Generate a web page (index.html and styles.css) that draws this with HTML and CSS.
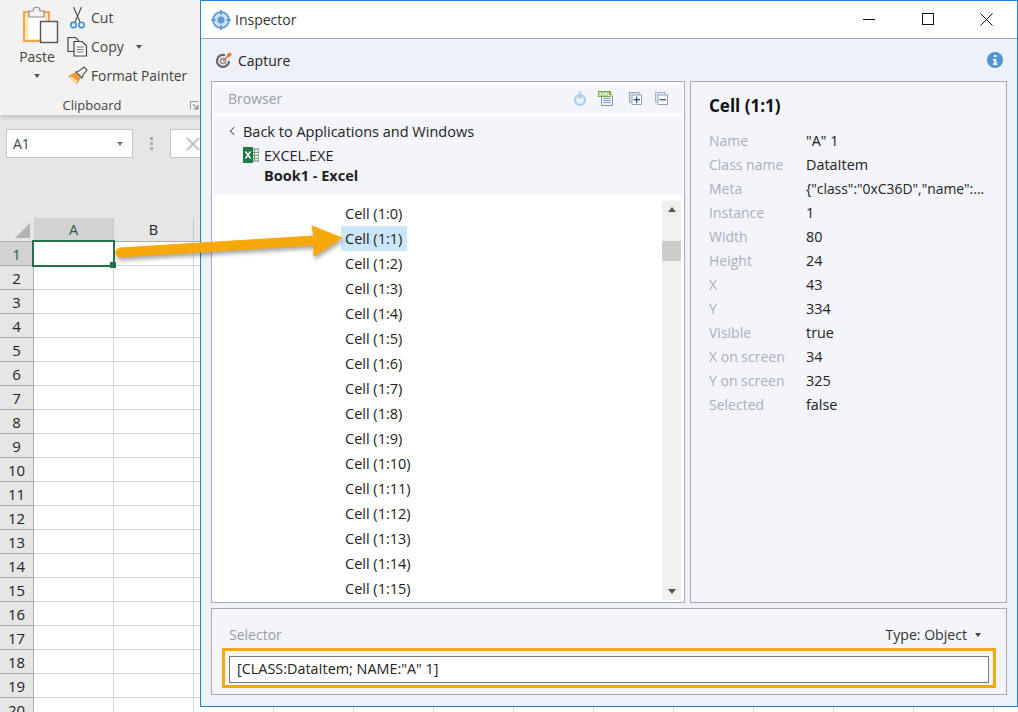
FILE: index.html
```html
<!DOCTYPE html>
<html lang="en">
<head>
  <meta charset="UTF-8" />
  <title>Inspector</title>
  <link rel="stylesheet" href="styles.css">
</head>
<body>
  <!-- Excel behind the inspector -->
  <div class="excel">
    <div class="ribbon">
      <div class="ribbon-tools">
        <div class="paste">
          <svg width="36" height="38" viewBox="0 0 36 38">
            <rect x="1" y="6" width="25" height="29" fill="#fde3b5" stroke="#f0a54e" stroke-width="2"/>
            <rect x="5" y="10" width="17" height="23" fill="#fff"/>
            <path d="M6 11V5h4c0-5 7-5 7 0h4v6z" fill="#f3f2f1" stroke="#8a8a8a" stroke-width="1.2"/>
            <rect x="17.500" y="15.500" width="17" height="21" fill="#f7f7f7" stroke="#555" stroke-width="1.4"/>
          </svg>
          <span>Paste</span>
          <i class="caret"></i>
        </div>
        <div class="clip-list">
          <div class="clip-item">
            <svg width="18" height="24" viewBox="0 0 18 24">
              <path d="M5 1l6.500 15M13 1L6.500 16" fill="none" stroke="#555" stroke-width="1.2"/>
              <circle cx="5" cy="19" r="2.700" fill="none" stroke="#2f8ed6" stroke-width="1.500"/>
              <circle cx="13" cy="19" r="2.700" fill="none" stroke="#2f8ed6" stroke-width="1.500"/>
            </svg>
            <span>Cut</span>
          </div>
          <div class="clip-item">
            <svg width="22" height="21" viewBox="0 0 22 21">
              <path d="M8 15.500H1.500V1.500H9l3 3v1" fill="#f3f2f1" stroke="#444" stroke-width="1.200"/>
              <path d="M7.500 5.500h8l4.500 4.500v10H7.500z" fill="#fafafa" stroke="#444" stroke-width="1.200"/>
              <path d="M10 11h7M10 13.500h7M10 16h7" stroke="#777"/>
            </svg>
            <span>Copy</span>
            <i class="caret copy-caret"></i>
          </div>
          <div class="clip-item">
            <svg width="21" height="19" viewBox="0 0 21 19">
              <path d="M1 10l8-4 5 6-4 6z" fill="#f39a3d"/>
              <path d="M4 11l6 5" stroke="#fff" stroke-width="1.200"/>
              <path d="M9 6l3-1 5-4 3 3-4 5-1 3z" fill="#f3f2f1" stroke="#555" stroke-width="1.200"/>
            </svg>
            <span class="painter">Format Painter</span>
          </div>
        </div>
      </div>
      <div class="ribbon-label">Clipboard</div>
      <svg class="launcher" width="9" height="9" viewBox="0 0 9 9">
        <path d="M.5 8V.5H8" fill="none" stroke="#999"/>
        <path d="M3 3l4.500 4.500M8 4v4H4" fill="none" stroke="#666"/>
      </svg>
    </div>
    <div class="formula-area">
      <div class="name-box">A1<i class="caret name-caret"></i></div>
      <div class="dots"><i></i><i></i><i></i></div>
      <div class="formula-btn">
        <svg width="16" height="16" viewBox="0 0 16 16"><path d="M2 2l12 12M14 2L2 14" stroke="#c4c4c4" stroke-width="2"/></svg>
      </div>
    </div>
    <div class="sheet">
      <div class="col-heads">
        <div class="corner"></div>
        <div class="col-head on">A</div>
        <div class="col-head">B</div>
        <div class="col-head"></div>
      </div>
      <div class="row"><div class="row-num on">1</div><div class="cells"><div class="active-cell"></div></div></div>
      <div class="row"><div class="row-num">2</div><div class="cells"></div></div>
      <div class="row"><div class="row-num">3</div><div class="cells"></div></div>
      <div class="row"><div class="row-num">4</div><div class="cells"></div></div>
      <div class="row"><div class="row-num">5</div><div class="cells"></div></div>
      <div class="row"><div class="row-num">6</div><div class="cells"></div></div>
      <div class="row"><div class="row-num">7</div><div class="cells"></div></div>
      <div class="row"><div class="row-num">8</div><div class="cells"></div></div>
      <div class="row"><div class="row-num">9</div><div class="cells"></div></div>
      <div class="row"><div class="row-num">10</div><div class="cells"></div></div>
      <div class="row"><div class="row-num">11</div><div class="cells"></div></div>
      <div class="row"><div class="row-num">12</div><div class="cells"></div></div>
      <div class="row"><div class="row-num">13</div><div class="cells"></div></div>
      <div class="row"><div class="row-num">14</div><div class="cells"></div></div>
      <div class="row"><div class="row-num">15</div><div class="cells"></div></div>
      <div class="row"><div class="row-num">16</div><div class="cells"></div></div>
      <div class="row"><div class="row-num">17</div><div class="cells"></div></div>
      <div class="row"><div class="row-num">18</div><div class="cells"></div></div>
      <div class="row"><div class="row-num">19</div><div class="cells"></div></div>
      <div class="row"><div class="row-num">20</div><div class="cells"></div></div>
    </div>
  </div>

  <!-- Inspector window -->
  <div class="window">
    <div class="titlebar">
      <svg width="20" height="20" viewBox="0 0 20 20">
        <circle cx="10" cy="10" r="8" fill="#cfe2f5" stroke="#5b9bd5" stroke-width="1.800"/>
        <circle cx="10" cy="10" r="3.500" fill="#5b9bd5"/>
        <path d="M10 0v5M10 15v5M0 10h5M15 10h5" stroke="#5b9bd5" stroke-width="1.600"/>
      </svg>
      <span class="title">Inspector</span>
      <div class="win-btns">
        <div class="win-btn"><svg width="12" height="12" viewBox="0 0 12 12"><path d="M0 6.500h12" stroke="#111"/></svg></div>
        <div class="win-btn"><svg width="12" height="12" viewBox="0 0 12 12"><rect x=".5" y=".5" width="11" height="11" fill="none" stroke="#111"/></svg></div>
        <div class="win-btn"><svg width="13" height="13" viewBox="0 0 13 13"><path d="M.5.500l12 12M12.500.500l-12 12" stroke="#111"/></svg></div>
      </div>
    </div>

    <div class="win-body">
      <div class="capture-row">
        <svg width="16" height="16" viewBox="0 0 16 16">
          <path d="M9 3.200A6 6 0 1 0 13 9" fill="none" stroke="#666" stroke-width="2.200"/>
          <circle cx="7" cy="9" r="2.600" fill="none" stroke="#8c8c8c" stroke-width="1.500"/>
          <path d="M7 9l6-6" stroke="#e8743b" stroke-width="1.600"/>
          <path d="M10.500 3l3.500-3 .5 1.500L16 2l-3 3.500z" fill="#e8743b"/>
        </svg>
        <span class="capture">Capture</span>
        <svg class="info" width="16" height="16" viewBox="0 0 16 16">
          <circle cx="8" cy="8" r="8" fill="#4f94d4"/>
          <rect x="7" y="3" width="2.400" height="2" fill="#fff"/>
          <path d="M6 7h3.400v4.200h1V13H6v-1.800h1V8.700H6z" fill="#fff"/>
        </svg>
      </div>

      <div class="panels">
        <div class="panel browser">
          <div class="browser-head">
            <span class="muted">Browser</span>
            <div class="head-icons">
              <svg class="icon-reload" width="14" height="16" viewBox="0 0 14 16">
                <circle cx="7" cy="10" r="5" fill="#e4eff9" stroke="#a9cdec" stroke-width="2.200"/>
                <circle cx="7" cy="10" r="1.800" fill="#f3f5fb"/>
                <path d="M8.500 0C5.500 2 4 4.500 5 7.500l2.500 2.200L8.500 7 7.500 4z" fill="#a9cdec"/>
              </svg>
              <svg class="icon-xml" width="16" height="16" viewBox="0 0 16 16">
                <path d="M3.500 2.500h8l3 3v10h-11z" fill="#eef3fb" stroke="#7d9ac7"/>
                <path d="M5.500 8.500h7M5.500 10.500h7M5.500 12.500h7" stroke="#7d9ac7"/>
                <rect x="0" y="1" width="13" height="6" fill="#7aa63c"/>
                <text x="6.500" y="6.200" class="xml">XML</text>
              </svg>
              <svg width="13" height="13" viewBox="0 0 13 13">
                <rect x=".5" y=".5" width="9.500" height="9.500" fill="#dfe5ee" stroke="#93a1b8"/>
                <rect x="3" y="3" width="9.500" height="9.500" fill="#fff" stroke="#93a1b8"/>
                <path d="M7.700 4.500v6.500M4.500 7.700H11" stroke="#174f8c" stroke-width="1.200"/>
              </svg>
              <svg width="13" height="13" viewBox="0 0 13 13">
                <rect x=".5" y=".5" width="9.500" height="9.500" fill="#dfe5ee" stroke="#a5b4c8"/>
                <rect x="3" y="3" width="9.500" height="9.500" fill="#fff" stroke="#93a1b8"/>
                <path d="M4.500 7.700H11" stroke="#174f8c" stroke-width="1.200"/>
              </svg>
            </div>
          </div>
          <div class="back-box">
            <div class="back-link"><span class="chev"></span>Back to Applications and Windows</div>
            <div class="app-line">
              <svg width="16" height="16" viewBox="0 0 16 16">
                <rect x="7" y="2" width="9" height="12" fill="#e8f0ea" stroke="#5d8f70"/>
                <path d="M7 5.500h9M7 8.500h9M7 11.500h9M11.500 2v12" stroke="#5d8f70" stroke-width=".8"/>
                <rect x="0" y="0" width="10" height="16" fill="#1f7a46"/>
                <path d="M2.500 4.500l5 7M7.500 4.500l-5 7" stroke="#fff" stroke-width="1.400"/>
              </svg>
              <span>EXCEL.EXE</span>
            </div>
            <div class="doc-line">Book1 - Excel</div>
          </div>
          <div class="tree-wrap">
            <ul class="tree">
              <li><span>Cell (1:0)</span></li>
              <li><span class="sel">Cell (1:1)</span></li>
              <li><span>Cell (1:2)</span></li>
              <li><span>Cell (1:3)</span></li>
              <li><span>Cell (1:4)</span></li>
              <li><span>Cell (1:5)</span></li>
              <li><span>Cell (1:6)</span></li>
              <li><span>Cell (1:7)</span></li>
              <li><span>Cell (1:8)</span></li>
              <li><span>Cell (1:9)</span></li>
              <li><span>Cell (1:10)</span></li>
              <li><span>Cell (1:11)</span></li>
              <li><span>Cell (1:12)</span></li>
              <li><span>Cell (1:13)</span></li>
              <li><span>Cell (1:14)</span></li>
              <li><span>Cell (1:15)</span></li>
            </ul>
            <div class="scrollbar">
              <i class="arrow-up"></i>
              <div class="thumb"></div>
              <i class="arrow-down"></i>
            </div>
          </div>
        </div>

        <div class="panel details">
          <h2>Cell (1:1)</h2>
          <dl class="props">
            <dt>Name</dt><dd>"A" 1</dd>
            <dt>Class name</dt><dd>DataItem</dd>
            <dt>Meta</dt><dd class="meta">{"class":"0xC36D","name":...</dd>
            <dt>Instance</dt><dd>1</dd>
            <dt>Width</dt><dd>80</dd>
            <dt>Height</dt><dd>24</dd>
            <dt>X</dt><dd>43</dd>
            <dt>Y</dt><dd>334</dd>
            <dt>Visible</dt><dd>true</dd>
            <dt>X on screen</dt><dd>34</dd>
            <dt>Y on screen</dt><dd>325</dd>
            <dt>Selected</dt><dd>false</dd>
          </dl>
        </div>
      </div>

      <div class="panel selector">
        <div class="selector-head">
          <span class="muted">Selector</span>
          <span class="type">Type: Object<i class="caret type-caret"></i></span>
        </div>
        <div class="selector-frame">
          <div class="selector-input">[CLASS:DataItem; NAME:"A" 1]</div>
        </div>
      </div>
    </div>
  </div>

  <!-- Callout from the cell to the tree item -->
  <svg class="callout" width="240" height="50" viewBox="0 0 240 50">
    <path d="M5 28 L199 16 L197 6 L227 18 L199 36 L199 25 L5.500 37 A4.500 4.500 0 0 1 5 28z" fill="#f7a90c" stroke="#f7a90c" stroke-linejoin="round"/>
  </svg>
</body>
</html>
```

FILE: styles.css
```css
* {
  box-sizing: border-box;
}

html, body {
  height: 100%;
}

body {
  margin: 0;
  overflow: hidden;
  position: relative;
  font-family: "Open Sans", "Noto Sans", sans-serif;
  font-size: 14px;
  color: #222;
  background: #fff;
}

svg {
  display: block;
  flex: none;
}

.caret {
  display: block;
  width: 0;
  height: 0;
  border-left: 3.500px solid transparent;
  border-right: 3.500px solid transparent;
  border-top: 4px solid #555;
}

.muted {
  color: #9a9ca6;
}

/* Excel */
.excel {
  display: flex;
  flex-direction: column;
  height: 100%;
}

.ribbon {
  height: 115px;
  background: #f3f2f1;
  position: relative;
  padding-top: 3px;
  box-shadow: 0 2px 5px rgba(0, 0, 0, 0.18);
  z-index: 1;
}

.ribbon-tools {
  display: flex;
  height: 88px;
}

.paste {
  width: 66px;
  padding: 3px 0 0 23px;
  display: flex;
  flex-direction: column;
  color: #444;
}

.paste span {
  margin-left: -18px;
  line-height: 20px;
  margin-top: 3px;
  width: 70px;
  text-align: center;
  transform: translateX(-3px);
}

.paste .caret {
  margin: 7px 0 0 11px;
}

.clip-list {
  display: flex;
  flex-direction: column;
}

.clip-item {
  display: flex;
  flex: none;
  align-items: center;
  height: 29px;
  gap: 2px;
  color: #444;
  white-space: nowrap;
}

.clip-item svg {
  width: 23px;
}

.painter {
  font-size: 13.800px;
}

.copy-caret {
  margin-left: 10px;
}

.ribbon-label {
  width: 184px;
  text-align: center;
  font-size: 13px;
  color: #444;
  line-height: 18px;
  padding-top: 5px;
}

.launcher {
  position: absolute;
  left: 190px;
  top: 101px;
}

.formula-area {
  height: 103px;
  background: #e6e6e6;
  padding: 14px 0 0 6px;
  display: flex;
  align-items: flex-start;
}

.name-box {
  width: 127px;
  height: 29px;
  background: #fff;
  border: 1px solid #c6c6c6;
  padding-left: 6px;
  line-height: 27px;
  font-size: 14px;
  color: #444;
  display: flex;
  justify-content: space-between;
  align-items: center;
}

.name-caret {
  margin-right: 9px;
  border-top-color: #777;
}

.dots {
  width: 37px;
  padding-top: 8px;
  display: flex;
  flex-direction: column;
  align-items: center;
  gap: 2px;
}

.dots i {
  width: 3px;
  height: 3px;
  background: #aaa;
}

.formula-btn {
  width: 60px;
  height: 29px;
  background: #fff;
  border: 1px solid #c6c6c6;
  padding: 6px 0 0 14px;
}

.sheet {
  flex: 1;
  overflow: hidden;
}

.col-heads {
  display: flex;
  height: 24px;
  background: #e6e6e6;
  border-bottom: 1px solid #ababab;
}

.corner {
  width: 34px;
  position: relative;
}

.corner::after {
  content: "";
  position: absolute;
  right: 4px;
  bottom: 3px;
  border-left: 15px solid transparent;
  border-bottom: 15px solid #b4b4b4;
}

.col-head {
  width: 80px;
  text-align: center;
  line-height: 23px;
  font-size: 14.500px;
  color: #222;
  border-right: 1px solid #c6c6c6;
}

.col-head.on {
  background: #d2d2d2;
  color: #2a5a44;
}

.row {
  display: flex;
  height: 24px;
}

.row-num {
  width: 34px;
  flex: none;
  background: #e6e6e6;
  border-right: 1px solid #ababab;
  border-bottom: 1px solid #ababab;
  text-align: center;
  line-height: 24px;
  font-size: 15px;
  color: #222;
}

.row-num.on {
  background: #d2d2d2;
  color: #2a5a44;
}

.cells {
  flex: 1;
  background:
    repeating-linear-gradient(to right, transparent 0, transparent 79px, #d4d4d4 79px, #d4d4d4 80px),
    linear-gradient(to top, #d4d4d4 1px, transparent 1px);
}

.active-cell {
  width: 83px;
  height: 27px;
  margin: -2px 0 0 -2px;
  border: 2px solid #217346;
  background: #fff;
  position: relative;
}

.active-cell::after {
  content: "";
  position: absolute;
  right: -3px;
  bottom: -3px;
  width: 6px;
  height: 6px;
  background: #217346;
}

/* Inspector window */
.window {
  position: absolute;
  left: 200px;
  top: 0;
  width: 818px;
  height: 707px;
  border: 1px solid #1583d8;
  background: #eef1f9;
  display: flex;
  flex-direction: column;
  z-index: 2;
}

.titlebar {
  height: 38px;
  flex: none;
  background: #fff;
  border-bottom: 1px solid #a8a8a8;
  display: flex;
  align-items: center;
  padding-left: 10px;
}

.title {
  margin-left: 4px;
  color: #333;
}

.win-btns {
  margin-left: auto;
  margin-right: 1px;
  display: flex;
}

.win-btn {
  width: 59px;
  display: flex;
  justify-content: center;
}

.win-body {
  flex: 1;
  display: flex;
  flex-direction: column;
  padding: 0 10px 11px;
}

.capture-row {
  height: 42px;
  flex: none;
  display: flex;
  align-items: center;
  padding-left: 5px;
}

.capture {
  margin-left: 6px;
  color: #222;
}

.info {
  margin-left: auto;
  margin-right: 4px;
}

.panels {
  display: flex;
  gap: 5px;
  height: 522px;
  flex: none;
}

.panel {
  border: 1px solid #a9a9b0;
  background: #f3f5fb;
}

.browser {
  width: 474px;
  background: #fff;
  padding: 2px;
  display: flex;
  flex-direction: column;
  font-size: 14.500px;
}

.browser-head {
  height: 28px;
  flex: none;
  background: #f3f5fb;
  display: flex;
  align-items: center;
  justify-content: space-between;
  padding: 0 14px 2px;
  margin-top: 1px;
  font-size: 14px;
}

.head-icons {
  display: flex;
  align-items: center;
  gap: 13px;
}

.icon-reload {
  margin-right: -2px;
}

.icon-xml {
  margin-right: 2px;
}

.xml {
  font-family: "DejaVu Sans", sans-serif;
  font-size: 5px;
  font-weight: bold;
  fill: #fff;
  text-anchor: middle;
}

.back-box {
  margin-top: 3px;
  height: 79px;
  flex: none;
  background: #f3f5fb;
  padding: 3px 0 0 17px;
}

.back-link {
  display: flex;
  align-items: center;
  height: 24px;
}

.chev {
  width: 6px;
  height: 6px;
  border-left: 1.500px solid #666;
  border-bottom: 1.500px solid #666;
  transform: rotate(45deg);
  margin-right: 6px;
}

.app-line {
  display: flex;
  align-items: center;
  gap: 5px;
  height: 24px;
  padding-left: 12px;
}

.doc-line {
  padding-left: 33px;
  margin-top: 1px;
  font-weight: bold;
  line-height: 16px;
}

.tree-wrap {
  flex: 1;
  display: flex;
  padding-top: 6px;
  min-height: 0;
}

.tree {
  list-style: none;
  margin: 0;
  padding: 0 0 0 127px;
  flex: 1;
}

.tree li {
  height: 25px;
  line-height: 25px;
}

.tree span {
  display: inline-block;
  padding: 0 4px;
}

.tree .sel {
  background: #cce6fb;
  width: 66px;
}

.scrollbar {
  width: 19px;
  margin-right: 1px;
  background: #f0f0f0;
  height: 399px;
  position: relative;
}

.arrow-up,
.arrow-down {
  position: absolute;
  left: 6px;
  width: 0;
  height: 0;
  border-left: 4px solid transparent;
  border-right: 4px solid transparent;
}

.arrow-up {
  top: 6px;
  border-bottom: 5px solid #555;
}

.arrow-down {
  bottom: 6px;
  border-top: 5px solid #555;
}

.thumb {
  position: absolute;
  top: 40px;
  left: 0;
  width: 100%;
  height: 20px;
  background: #cdcdcd;
}

.details {
  width: 317px;
  padding: 0 18px;
}

.details h2 {
  margin: 13px 0 0;
  font-size: 17px;
  line-height: 22px;
  font-weight: bold;
  color: #111;
}

.props {
  margin: 12px 0 0;
  display: grid;
  grid-template-columns: 97px 1fr;
  grid-auto-rows: 24px;
  line-height: 24px;
}

.props dt {
  color: #a9adbc;
}

.props dd {
  margin: 0;
  font-size: 14.400px;
  white-space: nowrap;
}

.props .meta {
  font-size: 13.900px;
}

.selector {
  margin-top: 5px;
  height: 87px;
  flex: none;
  padding: 0 10px;
}

.selector-head {
  height: 39px;
  display: flex;
  justify-content: space-between;
  align-items: flex-end;
  padding: 0 15px 4px 7px;
}

.type {
  display: flex;
  align-items: center;
  font-size: 14.100px;
  color: #333;
}

.type-caret {
  margin-left: 8px;
  border-top-color: #444;
}

.selector-frame {
  border: 3px solid #f7a90c;
  padding: 5px 4px;
  height: 40px;
}

.selector-input {
  height: 27px;
  background: #fff;
  border: 1px solid #7a7a7a;
  padding-left: 7px;
  line-height: 24px;
  font-size: 14.400px;
}

.callout {
  position: absolute;
  left: 115px;
  top: 220px;
  z-index: 3;
  filter: drop-shadow(1px 3px 2px rgba(0, 0, 0, 0.35));
}
```
